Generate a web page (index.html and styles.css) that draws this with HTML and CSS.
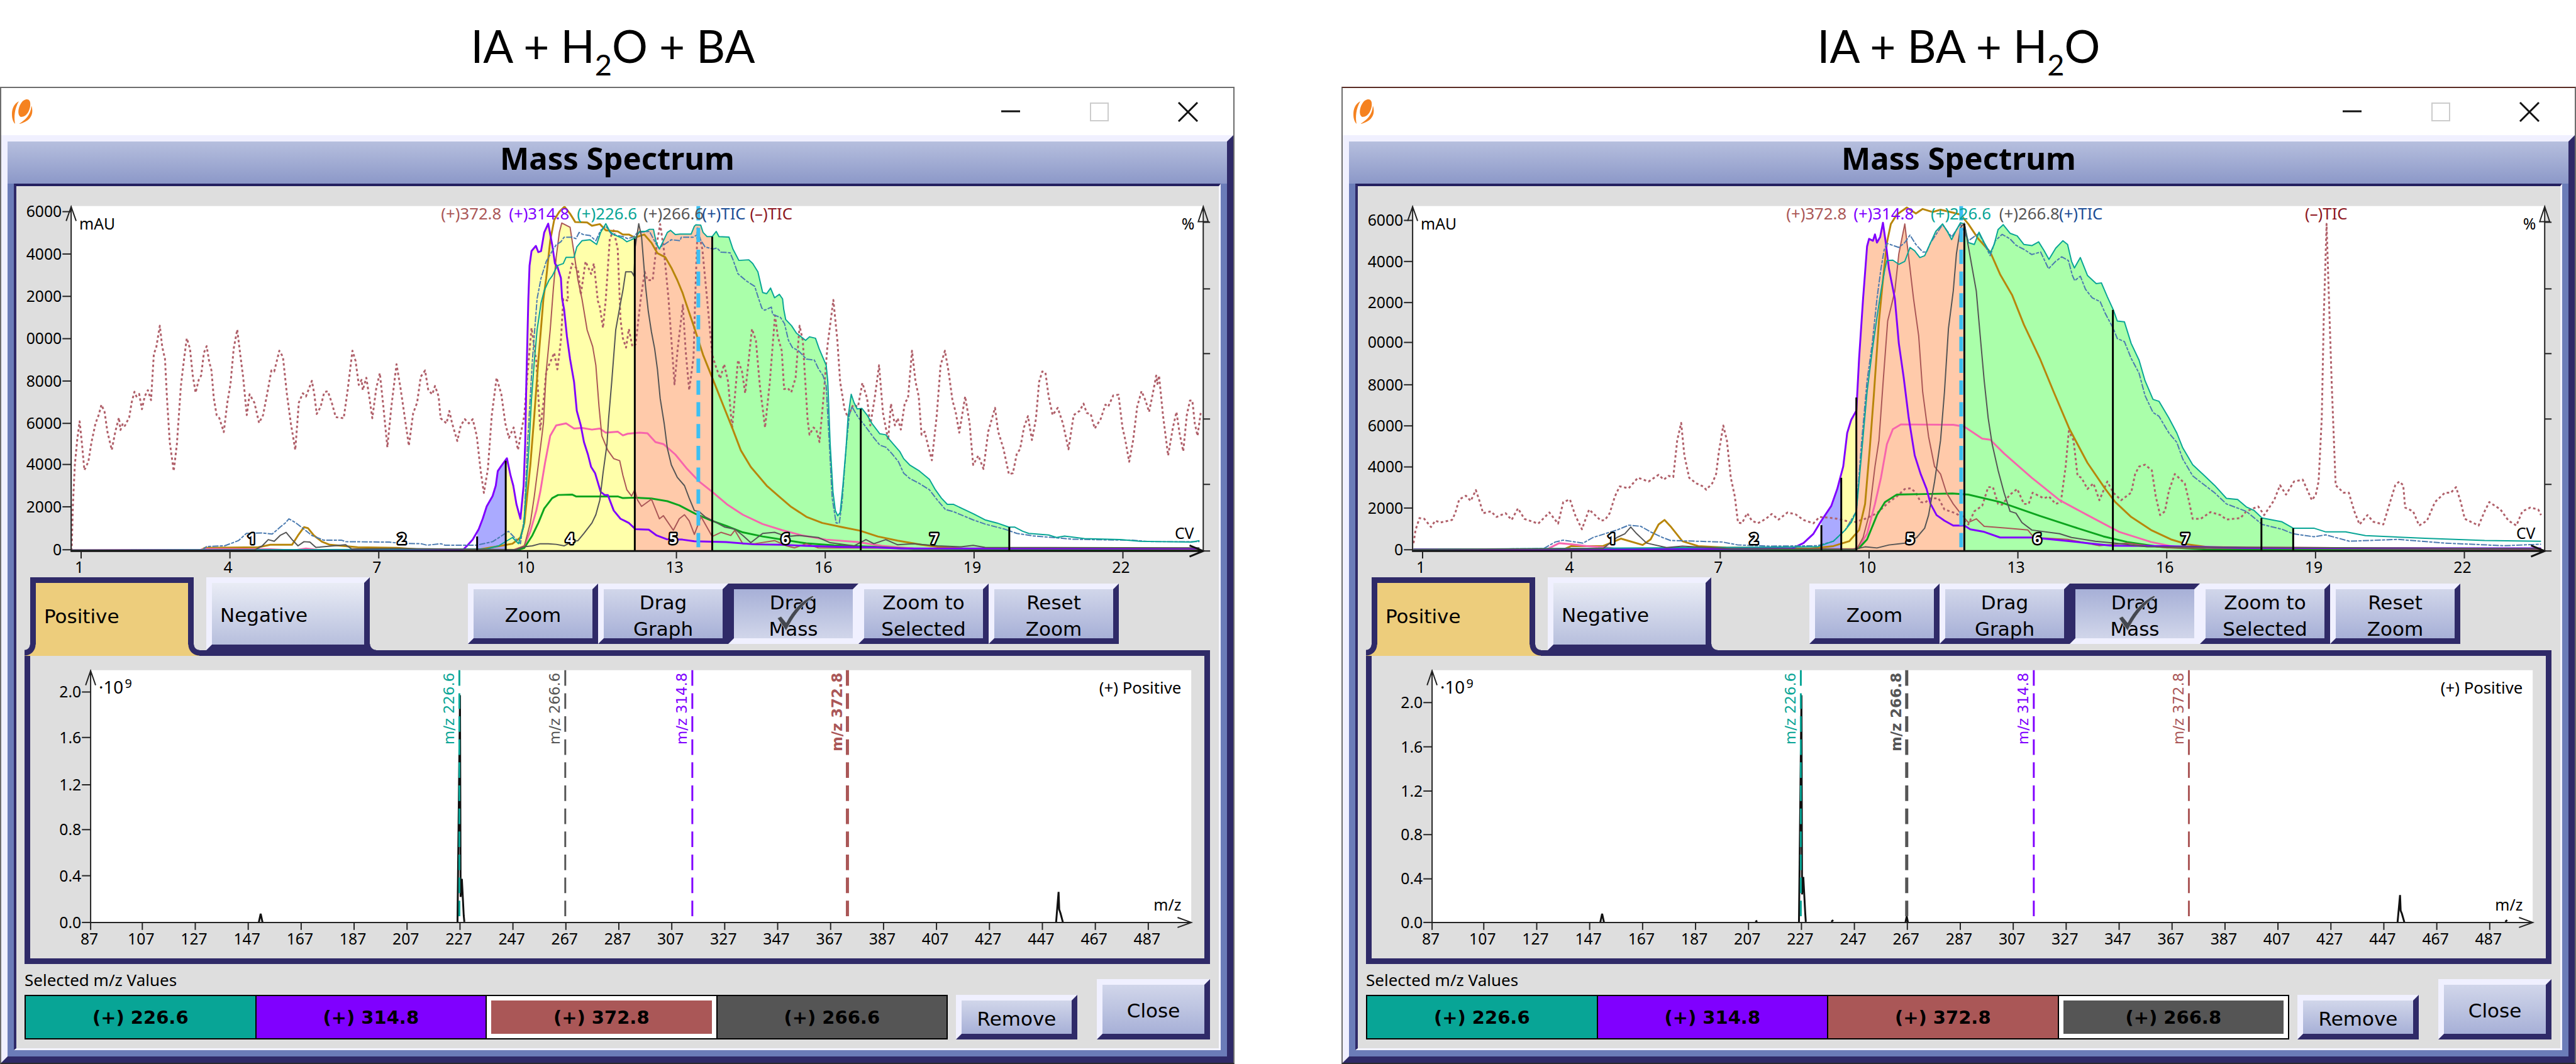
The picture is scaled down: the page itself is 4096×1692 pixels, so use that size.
FILE: index.html
```html
<!DOCTYPE html>
<html lang="en">
<head>
<meta charset="utf-8">
<title>Mass Spectrum</title>
<link rel="stylesheet" href="styles.css">
</head>
<body>
<main class="compare">
  <section class="pane">
    <h1 class="caption caption-first">IA + H<sub>2</sub>O + BA</h1>
    <div class="window">
      <div class="titlebar">
        <svg class="logo" viewBox="0 0 33 40" aria-hidden="true"><path d="M24 0C31 0 30 12 27 18C24 25 19 28 14 28C8 25 10 13 14 7C17 2 20 0 24 0Z"/><path d="M11 3C2 8 0 16 0 24C0 31 2 36 5 39C3 28 4 15 11 3Z"/><path d="M31 10C35 22 31 35 11 39C21 33 30 25 31 10Z"/></svg>
        <div class="wincontrols">
          <button type="button" aria-label="Minimize"><svg viewBox="0 0 30 30"><path class="ink" d="M0 14H30"/></svg></button>
          <button type="button" aria-label="Maximize" disabled><svg viewBox="0 0 30 30"><path class="faint" d="M1 1H29V29H1Z"/></svg></button>
          <button type="button" aria-label="Close window"><svg viewBox="0 0 30 30"><path class="ink" d="M0 0L30 30M30 0L0 30"/></svg></button>
        </div>
      </div>
      <div class="shell">
        <h2 class="heading">Mass Spectrum</h2>
        <div class="frame">
          <svg class="chart" id="trace-a" viewBox="26 299 1931 628" role="img" aria-label="Chromatogram"></svg>
          <div class="strip">
            <div class="tabs" role="tablist">
              <button type="button" class="tab tab-on" role="tab" aria-selected="true">Positive</button>
              <button type="button" class="tab tab-off" role="tab" aria-selected="false">Negative</button>
            </div>
            <div class="tools">
              <button type="button" class="btn btn-single">Zoom</button>
              <button type="button" class="btn">Drag<br>Graph</button>
              <button type="button" class="btn btn-down" aria-pressed="true">Drag<br>Mass<svg class="tick" viewBox="0 0 60 56" aria-hidden="true"><path d="M1 36L7 33L15 43C25 24 40 8 57 0L59 2C42 14 28 30 15 56Z"/></svg></button>
              <button type="button" class="btn">Zoom to<br>Selected</button>
              <button type="button" class="btn">Reset<br>Zoom</button>
            </div>
          </div>
          <div class="panel"><svg class="chart" id="mass-a" viewBox="48 1053 1885 486" role="img" aria-label="Mass spectrum, positive mode"></svg></div>
          <div class="footer">
            <div class="picked">
              <p class="label">Selected m/z Values</p>
              <div class="swatches">
                <button type="button" class="swatch teal">(+) 226.6</button>
                <button type="button" class="swatch violet">(+) 314.8</button>
                <button type="button" class="swatch brick chosen">(+) 372.8</button>
                <button type="button" class="swatch slate">(+) 266.6</button>
              </div>
            </div>
            <button type="button" class="btn btn-single btn-remove">Remove</button>
            <button type="button" class="btn btn-single btn-close">Close</button>
          </div>
        </div>
      </div>
    </div>
  </section>
  <section class="pane">
    <h1 class="caption">IA + BA + H<sub>2</sub>O</h1>
    <div class="window window-b">
      <div class="titlebar">
        <svg class="logo" viewBox="0 0 33 40" aria-hidden="true"><path d="M24 0C31 0 30 12 27 18C24 25 19 28 14 28C8 25 10 13 14 7C17 2 20 0 24 0Z"/><path d="M11 3C2 8 0 16 0 24C0 31 2 36 5 39C3 28 4 15 11 3Z"/><path d="M31 10C35 22 31 35 11 39C21 33 30 25 31 10Z"/></svg>
        <div class="wincontrols">
          <button type="button" aria-label="Minimize"><svg viewBox="0 0 30 30"><path class="ink" d="M0 14H30"/></svg></button>
          <button type="button" aria-label="Maximize" disabled><svg viewBox="0 0 30 30"><path class="faint" d="M1 1H29V29H1Z"/></svg></button>
          <button type="button" aria-label="Close window"><svg viewBox="0 0 30 30"><path class="ink" d="M0 0L30 30M30 0L0 30"/></svg></button>
        </div>
      </div>
      <div class="shell">
        <h2 class="heading">Mass Spectrum</h2>
        <div class="frame">
          <svg class="chart" id="trace-b" viewBox="26 299 1931 628" role="img" aria-label="Chromatogram"></svg>
          <div class="strip">
            <div class="tabs" role="tablist">
              <button type="button" class="tab tab-on" role="tab" aria-selected="true">Positive</button>
              <button type="button" class="tab tab-off" role="tab" aria-selected="false">Negative</button>
            </div>
            <div class="tools">
              <button type="button" class="btn btn-single">Zoom</button>
              <button type="button" class="btn">Drag<br>Graph</button>
              <button type="button" class="btn btn-down" aria-pressed="true">Drag<br>Mass<svg class="tick" viewBox="0 0 60 56" aria-hidden="true"><path d="M1 36L7 33L15 43C25 24 40 8 57 0L59 2C42 14 28 30 15 56Z"/></svg></button>
              <button type="button" class="btn">Zoom to<br>Selected</button>
              <button type="button" class="btn">Reset<br>Zoom</button>
            </div>
          </div>
          <div class="panel"><svg class="chart" id="mass-b" viewBox="48 1053 1885 486" role="img" aria-label="Mass spectrum, positive mode"></svg></div>
          <div class="footer">
            <div class="picked">
              <p class="label">Selected m/z Values</p>
              <div class="swatches">
                <button type="button" class="swatch teal">(+) 226.6</button>
                <button type="button" class="swatch violet">(+) 314.8</button>
                <button type="button" class="swatch brick">(+) 372.8</button>
                <button type="button" class="swatch slate chosen">(+) 266.8</button>
              </div>
            </div>
            <button type="button" class="btn btn-single btn-remove">Remove</button>
            <button type="button" class="btn btn-single btn-close">Close</button>
          </div>
        </div>
      </div>
    </div>
  </section>
</main>
<script src="charts.js"></script>
</body>
</html>
```
FILE: styles.css
```css
* { box-sizing: border-box; }
body { margin: 0; background: #fff; color: #000; font-family: "DejaVu Sans", sans-serif; }
button { font: inherit; color: inherit; margin: 0; padding: 0; }

.compare { display: flex; gap: 170px; }
.pane { flex: 1; min-width: 0; }

.caption { margin: 0; padding-top: 8px; text-align: center; font: 400 71px/130px Lato, "Open Sans", sans-serif; }
.caption-first { padding-right: 14px; }
.caption sub { font-size: 47px; line-height: 0; vertical-align: -20px; }

.window { border: 2px solid #6d6d6d; border-bottom-color: #2a2a2e; }
.window-b { border-top-color: #5a2c24; }
.titlebar { display: flex; align-items: center; justify-content: space-between; height: 75px; padding: 0 2px 0 17px; background: #fff; }
.logo { width: 33px; height: 40px; fill: #f58220; }
.wincontrols { display: flex; }
.wincontrols button { display: flex; align-items: center; justify-content: center; width: 141px; height: 73px; border: 0; background: none; }
.wincontrols svg { width: 30px; height: 30px; overflow: visible; fill: none; stroke-width: 3; }
.ink { stroke: #111; }
.faint { stroke: #ccc; stroke-width: 2; }

.shell { border: 10px solid; border-color: #f0f0ff #2f2a68 #2f2a68 #f0f0ff; background: #6b7cb8; }
.heading { margin: 0; height: 67px; background: linear-gradient(#b6bfde, #8c98c8); text-align: center; font: 700 49px/53px "Noto Sans", sans-serif; }
.frame { margin: 0 10px 10px; border: 4px solid; border-width: 4px 3px 3px 4px; border-color: #242060 #f4f4ff #f4f4ff #2f2a68; background: #dedede; }
.chart { display: block; width: 100%; height: auto; }
.chart text { font-family: "Noto Sans", sans-serif; font-size: 25px; }
.chart .peak-name { font-size: 26px; }
.chart .fraction { font-size: 24px; font-weight: 700; fill: #fff; stroke: #000; stroke-width: 5px; stroke-linejoin: round; paint-order: stroke; }
.chart .marker { font-family: "DejaVu Sans", sans-serif; font-size: 23px; }
.chart .marker-on { font-weight: 700; }
.chart .power { font-size: 28px; }
.chart .exponent { font-size: 20px; }
.plot { fill: #fff; }
.axis { fill: none; stroke: #222; stroke-width: 2; }
.base { fill: none; stroke: #111; stroke-width: 3; }
.cut { fill: none; stroke: #000; stroke-width: 3; }
.curve { fill: none; stroke-width: 2; stroke-linejoin: round; }
.bold { stroke-width: 3; }
.cursor { stroke: #3cbff2; stroke-width: 6; stroke-dasharray: 23 12; }

.strip { display: flex; justify-content: space-between; padding: 0 159px 0 22px; }
.tabs { display: flex; gap: 20px; }
.tab { position: relative; width: 260px; font-size: 31px; text-align: left; }
.tab-on { height: 125px; margin-bottom: -9px; padding: 0 13px 10px; border: 9px solid #2f2a68; border-bottom: 0; background: #edcd7c; z-index: 1; }
.tab-on::before, .tab-on::after { content: ""; position: absolute; bottom: 0; width: 18px; height: 18px; }
.tab-on::before { left: -18px; background: radial-gradient(circle at 0 0, #dedede 8px, #2f2a68 9px 17px, #edcd7c 18px); }
.tab-on::after { right: -18px; background: radial-gradient(circle at 100% 0, #dedede 8px, #2f2a68 9px 17px, #edcd7c 18px); }
.tab-off { height: 116px; padding: 4px 13px 0; border: 9px solid; border-color: #f0f0ff #2f2a68 #2f2a68 #f0f0ff; background: linear-gradient(#e9ecf5, #b7bfdd); }
.tab-off::after { content: ""; position: absolute; right: -19px; bottom: -9px; width: 10px; height: 10px; background: radial-gradient(circle at 100% 0, #dedede 9px, #2f2a68 10px); }
.tools { display: flex; margin-top: 10px; height: 96px; }
.btn { position: relative; width: 207px; padding-bottom: 2px; border: 9px solid; border-color: #f0f0ff #2f2a68 #2f2a68 #f0f0ff; background: linear-gradient(#d1d6ea, #a7b0d7); font-size: 31px; line-height: 42px; }
.btn-single { padding: 4px 0 0; }
.btn-down { border-color: #2f2a68 #f0f0ff #f0f0ff #2f2a68; background: linear-gradient(#a7b0d7, #d1d6ea); }
.tick { position: absolute; left: 68px; top: 10px; width: 60px; height: 56px; fill: #44474f; stroke: #b9bfd2; stroke-width: 1; }

.panel { margin: 0 14px 0 13px; border: 9px solid #2f2a68; }
.footer { display: flex; align-items: flex-end; padding: 0 14px 14px 13px; }
.picked { flex: 1; }
.label { margin: 0; padding: 10px 0 9px; font: 26px/30px "Noto Sans", sans-serif; }
.swatches { display: flex; height: 71px; border: 2px solid #000; }
.swatch { flex: 1; border: 0; font-size: 29px; font-weight: 700; }
.swatch + .swatch { border-left: 2px solid #000; }
.chosen { box-shadow: inset 0 0 0 7px #fff; }
.teal { background: #08a596; }
.violet { background: #8000ff; }
.brick { background: #aa5757; }
.slate { background: #555; }
.btn-remove { width: 193px; height: 71px; margin-left: 13px; }
.btn-close { width: 180px; height: 96px; margin-left: 31px; }
```
FILE: charts.js
```js
const NS = "http://www.w3.org/2000/svg";
const COLOR = {
  teal: "#08a596", violet: "#8000ff", brick: "#aa5757", slate: "#555555",
  ticPos: "#1c4e96", ticNeg: "#8e1822", ochre: "#b8860b", pink: "#f765ac", green: "#0ca51e"
};

function add(parent, tag, attrs, text) {
  const el = document.createElementNS(NS, tag);
  for (const key in attrs) el.setAttribute(key, attrs[key]);
  if (text !== undefined) el.textContent = text;
  parent.appendChild(el);
  return el;
}

// Traces are stored as "x,y" samples; map turns a sample into chart units.
function points(samples, map) {
  return samples.trim().split(/\s+/).map(pair => {
    const [x, y] = pair.split(",").map(Number);
    return map.x(x).toFixed(1) + " " + map.y(y).toFixed(1);
  });
}

function drawTraces(id, cfg) {
  const svg = document.getElementById(id);
  const { map } = cfg;
  const base = 885;
  add(svg, "rect", { class: "plot", x: 114, y: 331, width: 1818, height: base - 331 });
  const defs = add(svg, "defs", {});
  const plotClip = add(defs, "clipPath", { id: id + "-plot" });
  add(plotClip, "rect", { x: 114, y: 331, width: 1818, height: base - 330 });

  cfg.bands.forEach(([from, to, fill], i) => {
    const clip = add(defs, "clipPath", { id: id + "-band" + i });
    add(clip, "rect", { x: map.x(from), y: 331, width: map.x(to) - map.x(from), height: base - 331 });
    const g = add(svg, "g", { fill, "clip-path": `url(#${id}-band${i})` });
    ["violet", "brick", "teal", "slate"].forEach(name => {
      add(g, "path", { d: `M114 ${base}L` + points(cfg.traces[name], map).join("L") + `L1932 ${base}Z` });
    });
  });

  const curves = add(svg, "g", { "clip-path": `url(#${id}-plot)` });
  const curve = (name, color, extra) =>
    add(curves, "path", Object.assign({ class: "curve", stroke: color, d: "M" + points(cfg.traces[name], map).join("L") }, extra));
  curve("ticNeg", "#b0606a", { class: "curve bold", "stroke-dasharray": "4 4" });
  curve("ochre", COLOR.ochre, { class: "curve bold" });
  curve("pink", COLOR.pink, { class: "curve bold" });
  curve("green", COLOR.green, { class: "curve bold" });
  curve("brick", COLOR.brick);
  curve("violet", COLOR.violet, { class: "curve bold" });
  curve("ticPos", "#4a7ab0", { "stroke-dasharray": "10 2 5 2" });
  curve("teal", COLOR.teal);
  curve("slate", COLOR.slate);

  cfg.cuts.forEach(([x, y]) => add(svg, "path", { class: "cut", d: `M${map.x(x)} ${map.y(y)}V${base}` }));
  add(svg, "path", { class: "cursor", d: `M${map.x(cfg.cursor)} 331V${base}` });

  add(svg, "path", { class: "base", d: `M113 ${base}H1932M1910 ${base - 9}L1932 ${base}L1910 ${base + 9}` });
  add(svg, "path", { class: "axis", d: `M114 ${base}V331M106 355L114 332L122 355` });
  add(svg, "path", { class: "axis", d: `M1932 ${base}V331M1924 356L1932 332L1940 356Z` });
  [357, 464, 568, 673, 778, 885].forEach(y => add(svg, "path", { class: "axis", d: `M1932 ${y}H1943` }));
  cfg.yTicks.forEach(([y, label]) => {
    add(svg, "path", { class: "axis", d: `M100 ${y}H114` });
    add(svg, "text", { x: 99, y: y + 9, "text-anchor": "end" }, label);
  });
  for (let i = 0; i < 8; i++) {
    const x = 130 + i * 239;
    add(svg, "path", { class: "axis", d: `M${x} ${base}V897` });
    add(svg, "text", { x: x - 3, y: 920, "text-anchor": "middle" }, 1 + 3 * i);
  }
  add(svg, "text", { x: 127, y: 369 }, "mAU");
  add(svg, "text", { x: 1918, y: 369, "text-anchor": "end" }, "%");
  add(svg, "text", { x: 1917, y: 866, "text-anchor": "end" }, "CV");
  cfg.names.forEach(([x, label, color]) => add(svg, "text", { class: "peak-name", x, y: 353, fill: COLOR[color] }, label));
  cfg.fractions.forEach(([x, label]) => add(svg, "text", { class: "fraction", x, y: 874, "text-anchor": "middle" }, label));
}

function drawSpectrum(id, cfg) {
  const svg = document.getElementById(id);
  const base = 1481;
  add(svg, "rect", { class: "plot", x: 145, y: 1076, width: 1767, height: base - 1076 });
  add(svg, "path", { class: "base", d: cfg.peaks });
  cfg.markers.forEach(([x, label, color, on]) => {
    add(svg, "path", { stroke: COLOR[color], "stroke-width": on ? 5 : 3, "stroke-dasharray": "25 12", d: `M${x} 1076V${base}` });
    add(svg, "text", { class: on ? "marker marker-on" : "marker", fill: COLOR[color], "text-anchor": "end", transform: `translate(${x - 9} 1080) rotate(-90)` }, label);
  });
  add(svg, "path", { class: "axis", d: `M145 ${base}V1076M137 1100L145 1077L153 1100M145 ${base}H1912M1890 1473L1912 ${base}L1890 1489` });
  cfg.yTicks.forEach((y, i) => {
    add(svg, "path", { class: "axis", d: `M131 ${y}H145` });
    add(svg, "text", { x: 130, y: y + 9, "text-anchor": "end" }, (i * 0.4).toFixed(1));
  });
  for (let i = 0; i <= 20; i++) {
    const x = i === 0 ? 145 : 143 + i * 85;
    add(svg, "path", { class: "axis", d: `M${x} ${base}V1493` });
    add(svg, "text", { x: x - 2, y: 1516, "text-anchor": "middle" }, 87 + 20 * i);
  }
  add(svg, "text", { class: "power", x: 158, y: 1114 }, "·10");
  add(svg, "text", { class: "exponent", x: 200, y: 1104 }, "9");
  add(svg, "text", { class: "peak-name", x: 1896, y: 1114, "text-anchor": "end" }, "(+) Positive");
  add(svg, "text", { x: 1896, y: 1462, "text-anchor": "end" }, "m/z");
}

drawTraces("trace-a", {
  map: { x: v => v / 1.568, y: v => 480 + v / 3 },
  yTicks: [[340, "6000"], [408, "4000"], [476, "2000"], [544, "0000"], [612, "8000"], [680, "6000"], [746, "4000"], [814, "2000"], [883, "0"]],
  bands: [[1201, 1273, "#aaaaff"], [1273, 1598, "#ffffaa"], [1598, 1793, "#ffcaaa"], [1793, 2541, "#aaffaa"]],
  cuts: [[1201, 1145], [1273, 780], [1598, -290], [1793, -300], [2167, 530], [2541, 1100]],
  cursor: 1758,
  names: [[708, "(+)372.8", "brick"], [817, "(+)314.8", "violet"], [926, "(+)226.6", "teal"], [1033, "(+)266.6", "slate"], [1127, "(+)TIC", "ticPos"], [1204, "(–)TIC", "ticNeg"]],
  fractions: [[404, 1], [645, 2], [915, 4], [1081, 5], [1261, 6], [1500, 7]],
  traces: {
    ticNeg: `180,1215 183,1000 188,800 194,680 200,590 206,700 212,825 222,785 230,690 240,600 248,560 255,510 263,545 270,640 281,728 290,640 299,572 303,632 309,600 314,612 325,570 331,500 338,448 343,470 350,458 357,532 364,470 372,440 380,488 387,265 393,235 402,130 408,230 415,290 420,480 427,690 437,830 445,700 455,420 463,290 470,190 478,240 485,370 492,452 500,390 506,370 513,260 520,228 526,300 532,345 538,480 545,560 552,575 563,642 572,500 580,410 588,240 597,148 604,260 612,380 621,560 628,460 640,500 652,598 662,560 672,460 683,345 690,350 703,250 712,280 722,460 732,600 743,728 752,500 762,455 770,470 785,395 791,460 797,555 807,520 816,450 825,445 835,500 845,570 865,575 875,440 887,250 895,300 903,415 910,390 913,440 922,380 930,480 937,575 947,430 956,358 965,520 975,715 985,520 998,315 1008,430 1018,560 1029,708 1040,550 1050,500 1059,375 1070,345 1078,440 1088,460 1095,420 1104,470 1109,575 1124,600 1131,540 1138,600 1151,685 1160,610 1170,580 1180,600 1190,580 1200,660 1210,830 1218,935 1228,820 1238,560 1250,380 1262,460 1272,600 1281,670 1293,620 1304,728 1312,640 1320,560 1326,400 1338,140 1350,300 1360,630 1368,500 1375,350 1395,260 1403,340 1412,200 1418,0 1430,10 1428,-70 1440,-170 1455,-140 1462,-20 1474,-180 1488,-120 1495,-170 1505,10 1510,40 1518,140 1525,0 1535,-290 1545,-330 1555,-240 1560,0 1562,100 1568,190 1576,235 1583,145 1592,230 1600,220 1610,50 1613,0 1623,-130 1630,-90 1643,-90 1653,-260 1662,-360 1671,-240 1683,0 1698,412 1706,240 1719,30 1726,250 1735,440 1746,280 1750,0 1756,-340 1768,-240 1780,0 1793,270 1801,320 1813,385 1823,315 1833,400 1843,625 1858,295 1868,350 1876,455 1893,145 1903,200 1913,420 1926,620 1938,400 1951,80 1958,180 1968,250 1974,435 1983,430 1992,450 2003,380 2013,130 2021,200 2033,580 2038,655 2048,620 2055,630 2063,690 2073,480 2083,230 2098,5 2108,200 2115,400 2126,530 2134,570 2148,510 2160,520 2171,405 2183,480 2191,610 2202,480 2213,320 2223,550 2236,680 2243,505 2253,610 2260,575 2268,630 2278,500 2286,480 2296,250 2305,400 2313,470 2320,655 2328,640 2338,720 2346,778 2358,570 2368,320 2379,250 2388,350 2398,490 2406,545 2415,645 2430,470 2441,600 2450,800 2463,755 2476,820 2488,640 2505,525 2513,640 2526,720 2540,845 2550,840 2560,745 2568,725 2578,620 2588,565 2598,680 2608,580 2616,400 2624,350 2632,355 2640,470 2650,560 2663,525 2676,600 2690,725 2703,560 2718,540 2728,505 2736,550 2746,555 2756,625 2771,580 2783,510 2790,520 2803,465 2816,462 2826,620 2833,680 2843,785 2853,680 2863,520 2874,445 2884,490 2893,545 2902,460 2911,370 2914,410 2918,370 2928,560 2941,755 2953,620 2962,545 2970,650 2979,735 2988,560 2996,490 3002,490 3008,600 3015,660 3023,550`,
    violet: `180,1212 1165,1210 1178,1185 1190,1160 1205,1110 1215,1060 1225,1000 1240,950 1248,900 1253,830 1262,805 1276,768 1285,850 1292,900 1300,990 1310,1060 1318,900 1322,700 1325,400 1330,0 1333,-160 1338,-230 1349,-255 1355,-225 1362,-230 1370,-320 1380,-362 1390,-260 1397,-170 1403,-155 1412,-100 1415,0 1420,50 1427,180 1435,290 1445,400 1452,540 1462,610 1470,690 1480,750 1488,810 1498,840 1512,930 1522,945 1530,945 1545,1020 1562,1060 1573,1070 1583,1080 1600,1110 1633,1112 1653,1140 1678,1158 1718,1160 1748,1168 1828,1172 1898,1183 1968,1185 2028,1190 2108,1195 2208,1198 2268,1203 3018,1203`,
    teal: `180,1212 1225,1205 1255,1190 1290,1150 1305,1180 1318,1100 1325,900 1332,700 1338,480 1345,300 1352,150 1362,20 1370,-40 1382,-90 1390,-110 1403,-160 1418,-170 1425,-200 1445,-200 1452,-250 1465,-280 1485,-285 1502,-262 1512,-320 1525,-362 1535,-325 1545,-310 1568,-290 1578,-275 1590,-285 1600,-295 1610,-325 1625,-325 1635,-335 1645,-335 1652,-270 1660,-240 1670,-280 1680,-320 1688,-330 1700,-310 1712,-312 1740,-312 1748,-350 1752,-357 1764,-355 1770,-320 1780,-300 1793,-300 1803,-325 1810,-300 1835,-298 1845,-240 1860,-185 1885,-188 1895,-170 1908,-130 1920,-30 1930,-25 1940,-52 1950,-5 1962,-22 1970,0 1973,50 1978,100 1993,130 2005,165 2028,200 2038,183 2053,190 2062,240 2080,320 2084,400 2090,700 2097,930 2103,1020 2109,1045 2115,1030 2122,900 2130,720 2135,570 2143,460 2150,500 2158,530 2170,528 2183,560 2195,600 2215,650 2230,655 2240,680 2265,735 2275,770 2290,800 2315,830 2340,870 2355,920 2370,960 2385,990 2400,990 2450,1035 2480,1065 2510,1080 2540,1100 2555,1100 2575,1120 2590,1130 2640,1138 2660,1150 2680,1143 2730,1155 2820,1160 2870,1168 2930,1170 3000,1172 3020,1165`,
    ticPos: `180,1212 455,1210 510,1210 520,1193 565,1190 600,1165 620,1130 660,1128 685,1133 705,1100 718,1080 727,1060 745,1080 765,1110 785,1140 815,1163 860,1163 870,1170 980,1172 1010,1178 1060,1180 1075,1187 1110,1180 1120,1187 1200,1187 1240,1170 1260,1145 1280,1120 1295,1150 1310,1180 1320,1050 1328,700 1340,300 1352,0 1362,-100 1375,-180 1390,-230 1400,-260 1412,-275 1420,-297 1440,-297 1450,-290 1458,-320 1468,-310 1485,-305 1500,-280 1512,-330 1525,-350 1540,-310 1568,-300 1580,-290 1595,-298 1605,-320 1635,-325 1650,-270 1658,-245 1675,-265 1690,-285 1712,-280 1715,-297 1745,-297 1756,-310 1765,-280 1775,-250 1795,-240 1805,-245 1815,-225 1838,-222 1845,-190 1858,-120 1880,-85 1900,-60 1910,0 1918,45 1925,55 1942,40 1945,75 1965,90 1975,120 1985,200 1995,235 2010,250 2030,290 2050,295 2060,335 2072,370 2080,420 2088,700 2095,960 2105,1080 2113,1080 2120,980 2130,720 2138,560 2145,520 2160,570 2175,605 2200,670 2215,705 2230,715 2245,745 2262,785 2275,840 2290,865 2315,890 2340,920 2360,970 2380,1015 2400,1025 2450,1065 2480,1085 2530,1110 2560,1130 2600,1142 2700,1158 2750,1160 2850,1163 2900,1170 3020,1170`,
    slate: `180,1212 640,1211 660,1190 675,1160 690,1168 705,1140 720,1125 735,1160 750,1190 765,1170 780,1172 795,1198 870,1185 885,1205 990,1203 1300,1208 1320,1195 1340,1190 1360,1180 1380,1180 1400,1183 1420,1190 1440,1170 1455,1165 1470,1130 1490,1080 1500,1040 1510,970 1518,840 1528,700 1532,580 1540,400 1550,150 1562,20 1568,-40 1575,-130 1590,-130 1596,-110 1599,-250 1608,-362 1615,-300 1620,-180 1625,-60 1632,60 1640,160 1648,240 1655,340 1662,480 1672,600 1680,720 1690,800 1705,860 1723,900 1735,960 1748,1020 1760,1025 1775,1050 1800,1075 1825,1100 1850,1110 1870,1140 1890,1175 1920,1130 1950,1125 1980,1145 2010,1140 2060,1150 2090,1175 2150,1190 2180,1160 2200,1180 2230,1160 2260,1185 2300,1180 2360,1190 2420,1195 2450,1188 2480,1198 3020,1200`,
    ochre: `180,1212 505,1211 515,1200 650,1197 680,1185 735,1185 750,1140 765,1100 775,1105 790,1140 810,1170 830,1185 900,1197 1000,1200 1060,1208 1200,1210 1260,1190 1290,1180 1310,1150 1320,1080 1335,800 1345,560 1355,300 1368,0 1375,-100 1385,-280 1395,-380 1408,-420 1421,-444 1435,-410 1448,-370 1478,-368 1490,-352 1510,-360 1525,-330 1555,-325 1568,-310 1583,-310 1598,-295 1622,-310 1640,-270 1655,-220 1675,-200 1690,-150 1705,-90 1718,-30 1725,10 1748,140 1770,270 1793,380 1820,510 1843,620 1865,730 1890,810 1930,900 1960,950 1990,1000 2030,1050 2070,1080 2120,1100 2165,1117 2210,1145 2260,1165 2320,1185 2360,1195 2450,1207 3020,1210`,
    pink: `180,1212 500,1211 515,1205 680,1207 740,1212 770,1203 810,1212 1290,1212 1310,1200 1320,1190 1335,1120 1350,1020 1360,930 1372,790 1385,660 1400,610 1425,600 1445,625 1465,622 1490,630 1510,625 1525,645 1555,640 1568,658 1580,650 1610,645 1630,648 1650,690 1670,700 1700,750 1730,820 1760,880 1793,930 1830,990 1870,1040 1920,1085 1970,1115 2020,1140 2080,1160 2160,1172 2220,1190 2300,1203 3020,1208`,
    green: `180,1212 1300,1212 1320,1200 1340,1140 1355,1080 1370,1010 1390,960 1405,945 1440,943 1450,952 1555,952 1568,960 1600,958 1640,962 1680,975 1710,995 1750,1035 1790,1068 1830,1095 1870,1125 1920,1145 1970,1160 2030,1178 2100,1188 2200,1195 2300,1205 3020,1210`,
    brick: `180,1212 1290,1212 1320,1190 1335,1080 1345,950 1355,800 1368,600 1375,350 1385,150 1393,-50 1400,-200 1408,-320 1414,-365 1435,-345 1445,-220 1455,-90 1465,0 1478,150 1492,230 1500,320 1508,520 1515,660 1530,730 1545,770 1560,780 1568,850 1578,920 1590,950 1598,920 1605,970 1615,1000 1640,965 1660,1060 1670,1045 1695,1115 1710,1060 1723,1040 1735,1070 1748,1135 1765,1050 1793,1145 1815,1125 1840,1140 1850,1115 1870,1180 1900,1180 1950,1165 1980,1190 2000,1200 2030,1180 2060,1200 3020,1207`
  }
});

drawTraces("trace-b", {
  map: { x: v => v / 1.568 - 14, y: v => v / 1.668 },
  yTicks: [[354, "6000"], [420, "4000"], [486, "2000"], [550, "0000"], [618, "8000"], [684, "6000"], [750, "4000"], [816, "2000"], [883, "0"]],
  bands: [[1230, 1280, "#aaaaff"], [1280, 1318, "#ffffaa"], [1318, 1590, "#ffcaaa"], [1590, 2418, "#aaffaa"]],
  cuts: [[1230, 1407], [1280, 1280], [1318, 1065], [1590, 600], [1964, 830], [2338, 1388], [2418, 1415]],
  cursor: 1582,
  names: [[714, "(+)372.8", "brick"], [822, "(+)314.8", "violet"], [946, "(+)226.6", "teal"], [1056, "(+)266.8", "slate"], [1152, "(+)TIC", "ticPos"], [1547, "(–)TIC", "ticNeg"]],
  fractions: [[434, 1], [662, 2], [913, 5], [1117, 6], [1355, 7]],
  traces: {
    ticNeg: `203,1455 208,1420 218,1388 230,1390 247,1412 258,1395 270,1400 300,1393 308,1375 318,1338 335,1328 347,1342 360,1313 370,1345 378,1375 398,1370 412,1385 435,1375 450,1393 466,1362 482,1390 517,1403 545,1373 567,1403 580,1345 597,1338 610,1380 627,1418 645,1365 675,1395 685,1393 697,1375 710,1330 722,1303 745,1308 768,1280 795,1290 820,1272 833,1285 845,1275 857,1278 867,1180 877,1133 885,1220 897,1280 915,1295 932,1303 940,1312 955,1295 965,1270 972,1210 983,1140 992,1180 1002,1280 1012,1330 1020,1400 1030,1402 1043,1375 1055,1395 1070,1402 1090,1390 1105,1377 1122,1392 1145,1373 1165,1378 1185,1393 1210,1402 1225,1385 1250,1387 1270,1390 1290,1395 1310,1400 1340,1390 1370,1375 1385,1360 1400,1345 1420,1330 1440,1310 1455,1308 1468,1320 1480,1345 1490,1347 1505,1335 1525,1335 1540,1365 1568,1375 1575,1380 1590,1395 1600,1405 1615,1370 1635,1355 1650,1305 1662,1305 1675,1350 1685,1352 1705,1325 1723,1310 1740,1350 1752,1350 1762,1320 1790,1335 1803,1330 1820,1350 1833,1345 1845,1250 1853,1155 1865,1180 1875,1275 1885,1280 1900,1310 1915,1295 1930,1340 1950,1290 1965,1320 1985,1340 2010,1320 2020,1270 2030,1250 2045,1245 2062,1260 2072,1330 2083,1380 2095,1370 2105,1315 2120,1270 2145,1295 2155,1340 2165,1390 2185,1390 2210,1372 2235,1380 2250,1392 2285,1388 2300,1370 2330,1357 2345,1380 2370,1340 2385,1300 2400,1325 2420,1290 2442,1285 2465,1340 2475,1325 2482,1290 2490,1120 2495,850 2502,600 2508,800 2515,1030 2525,1300 2545,1320 2558,1320 2572,1370 2585,1405 2605,1380 2620,1398 2645,1405 2662,1345 2675,1300 2685,1290 2695,1300 2700,1360 2720,1370 2735,1408 2755,1395 2775,1345 2800,1320 2815,1320 2828,1305 2840,1345 2850,1390 2885,1408 2900,1370 2912,1345 2940,1365 2960,1395 2980,1408 2995,1370 3015,1360 3035,1365 3042,1380`,
    violet: `203,1472 1155,1470 1185,1455 1210,1430 1230,1395 1255,1355 1270,1310 1285,1250 1295,1160 1305,1125 1318,1100 1325,960 1335,800 1345,660 1350,640 1360,645 1365,628 1370,650 1378,635 1385,597 1392,650 1400,720 1415,800 1425,920 1437,1010 1450,1120 1465,1220 1480,1270 1495,1310 1505,1350 1520,1380 1540,1395 1562,1408 1590,1408 1605,1418 1640,1425 1680,1440 1760,1440 1830,1447 1900,1455 1960,1462 2100,1463 2300,1468 3042,1469`,
    teal: `203,1472 1220,1465 1260,1450 1290,1420 1305,1400 1318,1370 1330,1230 1345,1050 1358,940 1370,850 1380,780 1390,720 1395,698 1410,697 1425,708 1440,700 1453,663 1465,672 1478,690 1490,685 1505,650 1518,620 1535,600 1547,620 1558,642 1568,620 1580,597 1590,600 1600,650 1615,655 1627,622 1640,650 1655,678 1665,655 1675,615 1688,602 1705,625 1723,632 1740,655 1760,658 1777,648 1790,670 1803,695 1820,665 1838,645 1850,655 1860,700 1867,718 1882,690 1900,738 1922,760 1935,758 1950,795 1965,830 1975,860 1993,862 2010,920 2030,965 2045,1020 2065,1070 2080,1075 2105,1120 2125,1160 2140,1200 2165,1245 2190,1270 2220,1300 2250,1335 2278,1338 2300,1358 2320,1368 2340,1388 2390,1398 2418,1415 2470,1415 2500,1425 2550,1425 2600,1435 2750,1442 2900,1448 3042,1450`,
    ticPos: `203,1472 530,1470 560,1452 580,1447 630,1455 655,1440 685,1430 715,1420 745,1407 775,1410 800,1425 830,1440 850,1448 980,1452 1020,1460 1100,1463 1220,1462 1260,1450 1290,1420 1318,1370 1330,1200 1345,1020 1358,920 1370,800 1380,720 1388,670 1395,652 1425,663 1440,650 1453,630 1468,655 1485,675 1495,675 1505,650 1535,602 1558,635 1580,600 1600,645 1627,625 1655,685 1668,645 1685,628 1705,640 1720,657 1740,668 1760,682 1782,675 1802,720 1820,700 1835,688 1852,698 1862,738 1868,752 1882,740 1895,775 1912,798 1932,808 1945,840 1965,880 1975,907 1993,915 2010,960 2030,1000 2045,1060 2065,1105 2080,1115 2105,1160 2125,1185 2140,1230 2165,1275 2220,1320 2250,1350 2300,1370 2340,1405 2390,1418 2418,1430 2470,1438 2500,1433 2560,1450 2680,1445 2800,1455 2950,1462 3042,1458`,
    slate: `203,1472 680,1470 715,1440 735,1430 750,1412 765,1430 790,1455 840,1467 880,1463 1000,1470 1310,1472 1340,1465 1370,1468 1400,1460 1440,1455 1470,1440 1490,1415 1500,1380 1515,1290 1530,1180 1540,1050 1550,880 1562,780 1570,680 1580,610 1590,598 1600,660 1620,780 1630,900 1640,1020 1650,1120 1660,1190 1675,1260 1690,1320 1705,1370 1720,1375 1735,1400 1760,1420 1830,1430 1860,1440 1920,1450 1970,1455 2050,1465 3042,1470`,
    ochre: `203,1473 580,1472 600,1463 680,1463 725,1443 780,1460 800,1445 820,1405 835,1393 850,1410 880,1450 920,1463 990,1467 1200,1470 1260,1463 1300,1450 1325,1420 1340,1350 1352,1200 1362,1060 1375,860 1385,750 1395,650 1405,600 1420,575 1445,556 1468,572 1485,560 1510,568 1530,562 1562,570 1580,575 1600,600 1625,640 1655,675 1680,735 1710,790 1740,870 1780,960 1815,1050 1855,1150 1900,1240 1945,1310 1970,1345 2010,1385 2060,1420 2110,1445 2150,1458 2220,1468 3042,1472`,
    pink: `203,1473 540,1471 570,1455 600,1458 640,1463 690,1467 720,1472 1310,1472 1325,1465 1345,1430 1365,1350 1380,1280 1395,1190 1410,1150 1430,1137 1562,1138 1590,1143 1635,1175 1655,1178 1690,1215 1760,1280 1830,1340 1900,1380 1980,1425 2060,1452 2120,1465 3042,1472`,
    green: `203,1473 1310,1473 1325,1468 1345,1445 1370,1380 1390,1345 1420,1325 1560,1322 1600,1325 1680,1345 1780,1382 1860,1410 1940,1437 2000,1452 2080,1465 2200,1472 3042,1472`,
    brick: `203,1472 1320,1470 1335,1440 1350,1380 1365,1250 1375,1180 1385,1030 1397,860 1415,780 1425,680 1440,600 1450,690 1462,800 1475,900 1485,1050 1500,1170 1515,1250 1530,1270 1545,1320 1562,1350 1580,1375 1600,1400 1620,1390 1640,1410 1700,1415 1750,1420 1765,1440 1850,1445 1930,1462 2000,1455 2100,1468 3042,1472`
  }
});

drawSpectrum("mass-a", {
  yTicks: [1481, 1406, 1332, 1260, 1184, 1111],
  markers: [[737, "m/z 226.6", "teal"], [907, "m/z 266.6", "slate"], [1111, "m/z 314.8", "violet"], [1360, "m/z 372.8", "brick", true]],
  peaks: "M734 1481L738 1116L739 1440L741 1411L744 1470L745 1480M415 1481L418 1467L421 1481M1695 1481L1699 1432L1700 1460L1702 1466L1706 1481"
});
drawSpectrum("mass-b", {
  yTicks: [1481, 1411, 1340, 1270, 1199, 1128],
  markers: [[737, "m/z 226.6", "teal"], [907, "m/z 266.8", "slate", true], [1111, "m/z 314.8", "violet"], [1360, "m/z 372.8", "brick"]],
  peaks: "M734 1481L738 1116L739 1436L741 1408L744 1465L745 1480M415 1481L418 1467L421 1481M905 1481L907 1471L909 1481M664 1480L667 1478M786 1480L789 1477M1868 1480L1871 1477M1695 1481L1699 1437L1700 1462L1702 1467L1706 1481"
});
```
